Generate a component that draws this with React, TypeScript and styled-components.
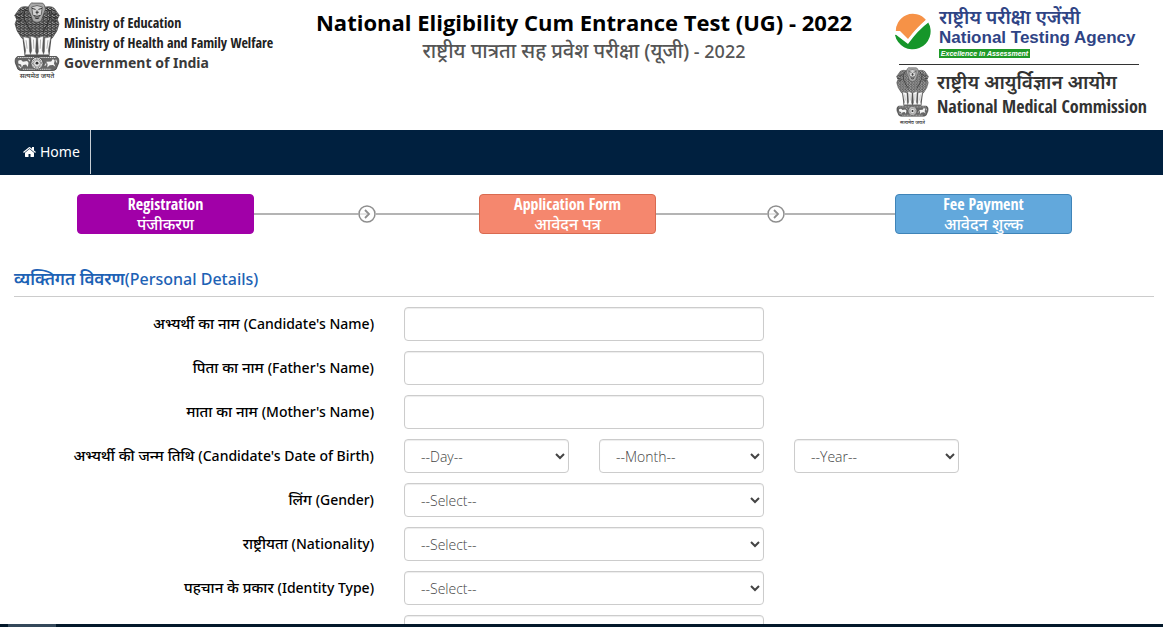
import React from "react";
import styled, { createGlobalStyle, css } from "styled-components";

const GlobalStyle = createGlobalStyle`
  *, *::before, *::after { box-sizing: border-box; }
  html, body { margin: 0; height: 100%; overflow: hidden; }
  body {
    background: #fff;
    color: #000;
    font-family: "Noto Sans", "Open Sans", sans-serif;
    font-size: 14px;
    line-height: 20px;
  }
`;

const condensed = '"Liberation Sans Narrow", "Open Sans Condensed", Roboto, sans-serif';

const Page = styled.div`
  height: 100vh;
  overflow: hidden;
`;

const Header = styled.header`
  display: grid;
  grid-template-columns: 1fr auto 1fr;
  align-items: start;
  min-height: 130px;
  padding: 0 9px 0 14px;
`;

const Ministry = styled.div`
  display: flex;
  gap: 4px;
  padding-top: 2px;
`;

const EmblemFigure = styled.figure<{ $size: number }>`
  display: flex;
  flex-direction: column;
  align-items: center;
  flex: none;
  width: ${(p) => p.$size}px;
  margin: 0;

  svg {
    display: block;
    width: 100%;
    height: auto;
  }
`;

const Motto = styled.figcaption<{ $size: number }>`
  font-size: ${(p) => p.$size}px;
  line-height: 10px;
  font-weight: 500;
  white-space: nowrap;
  color: #333;
`;

const MinistryLines = styled.div`
  padding-top: 11px;
  white-space: nowrap;
`;

const MinistryLine = styled.div<{ $wide?: boolean }>`
  font-family: ${(p) => (p.$wide ? '"Noto Sans", sans-serif' : condensed)};
  font-size: 14px;
  font-weight: 700;
  line-height: 20px;
  color: ${(p) => (p.$wide ? "#3a3a3a" : "#222")};
`;

const Titles = styled.div`
  padding-top: 8px;
  text-align: center;
  white-space: nowrap;
`;

const Title = styled.h1`
  margin: 0;
  font-family: "Open Sans", "Noto Sans", sans-serif;
  font-size: 22px;
  line-height: 28px;
  font-weight: 700;
`;

const Subtitle = styled.p`
  margin: 0;
  font-size: 18px;
  line-height: 30px;
  font-weight: 500;
  color: #555;
`;

const Hindi = styled.span<{ $size: number; $bold?: boolean }>`
  font-size: ${(p) => p.$size}px;
  line-height: 20px;
  font-weight: ${(p) => (p.$bold ? 600 : "inherit")};
`;

const Agencies = styled.div`
  justify-self: end;
  width: 262px;
  white-space: nowrap;
`;

const Agency = styled.div`
  display: flex;
  gap: 8px;
`;

const TestingAgency = styled(Agency)`
  padding: 5px 0 6px 2px;

  > svg {
    flex: none;
    width: 37px;
    height: 37px;
    margin-top: 8px;
  }
`;

const MedicalCommission = styled(Agency)`
  padding: 2px 0 0 4px;
`;

const Rule = styled.hr`
  height: 1px;
  margin: 0 15px 0 7px;
  border: 0;
  background: #333;
`;

const AgencyHindi = styled.div<{ $color: string }>`
  font-size: 19px;
  line-height: 24px;
  font-weight: 600;
  color: ${(p) => p.$color};
`;

const TestingName = styled.div`
  font: 700 17px/18px "Liberation Sans", Arial, sans-serif;
  color: #2f4485;
`;

const Tagline = styled.div`
  width: 91px;
  margin-top: 2px;
  background: #1f9a27;
  color: #fff;
  font: italic 700 7px/9px "Liberation Sans", Arial, sans-serif;
  text-align: center;
`;

const CommissionNames = styled.div`
  padding-top: 3px;
`;

const CommissionName = styled.div`
  font-family: ${condensed};
  font-size: 18px;
  line-height: 24px;
  font-weight: 600;
  color: #333;
`;

const Nav = styled.nav`
  display: flex;
  height: 45px;
  padding-bottom: 1px;
  background: #00203f;
`;

const HomeLink = styled.a`
  display: flex;
  align-items: center;
  gap: 4px;
  padding: 0 10px 0 23px;
  border-right: 1px solid #c6cdd4;
  color: #fff;
  text-decoration: none;

  svg {
    width: 13px;
    height: 14px;
    fill: currentColor;
  }
`;

const Steps = styled.ol`
  display: flex;
  align-items: center;
  margin: 0;
  padding: 19px 91px 0 77px;
  list-style: none;
`;

const Step = styled.li<{ $fill: string; $edge: string }>`
  flex: none;
  width: 177px;
  height: 40px;
  border: 1px solid ${(p) => p.$edge};
  border-radius: 4px;
  background: ${(p) => p.$fill};
  color: #fff;
  font-family: ${condensed};
  font-size: 16px;
  line-height: 19px;
  font-weight: 700;
  text-align: center;
`;

const StepHindi = styled.span`
  display: block;
  font: 500 16px/20px "Noto Sans", sans-serif;
`;

const Connector = styled.li<{ $grow: number }>`
  display: flex;
  align-items: center;
  flex: ${(p) => p.$grow} 1 0;

  &::before,
  &::after {
    content: "";
    flex: 1;
    height: 2px;
    background: #b4b4b4;
  }

  svg {
    flex: none;
    width: 18px;
    height: 18px;
  }
`;

const Form = styled.form`
  padding: 34px 9px 0 14px;
`;

const SectionTitle = styled.h2`
  margin: 0 0 10px;
  padding-bottom: 6px;
  border-bottom: 1px solid #ccc;
  color: #1d62b5;
  font-size: 16px;
  line-height: 22px;
  font-weight: 500;
`;

const FieldRow = styled.div`
  display: grid;
  grid-template-columns: repeat(6, 1fr);
  column-gap: 30px;
  margin-bottom: 10px;
`;

const Label = styled.label`
  grid-column: span 2;
  height: 34px;
  padding-top: 6px;
  text-align: right;
  white-space: nowrap;
  font-weight: 500;
`;

const control = css<{ $span: number }>`
  grid-column: span ${(p) => p.$span};
  width: 100%;
  height: 34px;
  padding: 6px 12px;
  border: 1px solid #ccc;
  border-radius: 4px;
  background: #fff;
  box-shadow: inset 0 1px 1px rgba(0, 0, 0, 0.075);
  color: #444;
  font: 300 14px/20px "Open Sans", "Noto Sans", sans-serif;
`;

const TextInput = styled.input`
  ${control}
`;

const Select = styled.select`
  ${control}
`;

const Taskbar = styled.div`
  position: fixed;
  right: 0;
  bottom: 0;
  left: 0;
  height: 3px;
  padding-left: 8px;
  background: #03182a;
`;

const TaskbarItem = styled.div`
  width: 48px;
  height: 100%;
  background: #34485a;
`;

function Emblem({ size, mottoSize }: { size: number; mottoSize: number }) {
  const id = `mane${size}`;
  return (
    <EmblemFigure $size={size}>
      <svg viewBox="0 0 130 196" aria-hidden="true">
        <defs>
          <pattern id={id} width="11" height="10" patternUnits="userSpaceOnUse">
            <rect width="11" height="10" fill="#bcbcbc" />
            <path d="M0 2q3 5 6 1t5 1M1 8q3 3 5 0t4-2" stroke="#1c1c1c" strokeWidth="2.8" fill="none" />
          </pattern>
        </defs>
        <g stroke="#444" strokeWidth="2" strokeLinejoin="round">
          <path d="M40 14Q18 10 12 24L2 38l6 10-5 14 6 20 13 20 20 8h46l20-8 13-20 6-20-5-14 6-10-10-14q-6-14-28-10Z" fill={`url(#${id})`} />
          <path d="M44 8q5-8 12-5h18q9-2 12 6 7 10-2 24l-7 20q-12 9-24 0l-7-20q-10-12-2-25Z" fill="#a8a8a8" />
          <path d="M50 14q15-8 30 0l-3 22q-12 15-24 0Z" fill="#d2d2d2" />
        </g>
        <g fill="none" stroke="#2a2a2a" strokeWidth="2.6">
          <path d="M51 18l10 3M79 18l-10 3M61 29h9M65 24v11M56 38q9 5 18 0M59 45q6 4 12 0" />
          <path d="M9 34l10 2 6-9M5 45l13 1M10 55q9 1 13-7M121 34l-10 2-6-9M125 45l-13 1M120 55q-9 1-13-7" />
          <path d="M35 19q-11 15-5 31t18 34M95 19q11 15 5 31T82 84" />
        </g>
        <path d="M24 102h82l-6 51H30Z" fill="#555" />
        <g fill="#fafafa" stroke="#555" strokeWidth="1.2">
          <path d="M26 98l17 4 1 38 3 9H31l2-11Z" />
          <path d="M47 96l16 6-2 38 3 9H46l4-11Z" />
          <path d="M83 96l-16 6 2 38-3 9h18l-4-11Z" />
          <path d="M104 98l-17 4-1 38-3 9h16l-2-11Z" />
        </g>
        <path d="M34 108l3 24M55 106l1 26M75 106l-1 26M96 108l-3 24" stroke="#aaa" strokeWidth="2.5" />
        <path d="M10 154h110q9 5 6 19l-7 17q-6 6-18 4H29q-12 2-18-4l-7-17q-3-14 6-19Z" fill="#666" stroke="#333" strokeWidth="2" />
        <path d="M11 157h108M25 190h80" stroke="#d6d6d6" strokeWidth="3" strokeDasharray="4 2" />
        <circle cx="65" cy="173" r="17" fill="#e2e2e2" stroke="#333" strokeWidth="2" />
        <circle cx="65" cy="173" r="11" fill="none" stroke="#777" strokeWidth="6" strokeDasharray="2 2" />
        <circle cx="65" cy="173" r="4" fill="#333" />
        <path d="M12 166q9-5 13 3l12-2 4 5-2 12-5-7-8 1-4 7-2-8-8-3ZM91 169l14-1 5-7 5 4-2 9 4 9-7-5-9 1-7 6 1-10Z" fill="#f4f4f4" />
        <path d="M13 180l7 7M41 162l4 5M87 180l4-6M118 163l3 8" stroke="#e4e4e4" strokeWidth="3" />
      </svg>
      <Motto $size={mottoSize}>सत्यमेव जयते</Motto>
    </EmblemFigure>
  );
}

function TickLogo() {
  return (
    <svg viewBox="0 0 37 37" aria-hidden="true">
      <path d="M2 20A17 17 0 0 1 32 7Q23 15 14 27L6 19Z" fill="#f69247" />
      <path d="M1 22l5-2 8 9Q24 16 34 9A18 18 0 1 1 1 22Z" fill="#16962a" />
      <path d="M1 18l5 0 8 8Q23 14 33 6l2 3Q24 17 14 31L1 21Z" fill="#fff" />
    </svg>
  );
}

function HomeIcon() {
  return (
    <svg viewBox="0 128 1664 1536" aria-hidden="true">
      <path d="M1408 992v480q0 26-19 45t-45 19h-384v-384h-256v384h-384q-26 0-45-19t-19-45v-480q0-1 .5-3t.5-3l575-474 575 474q1 2 1 6zm223-69l-62 74q-8 9-21 11h-3q-13 0-21-7l-692-577-692 577q-12 8-24 7-13-2-21-11l-62-74q-8-10-7-23.5t11-21.5l719-599q32-26 76-26t76 26l244 204v-195q0-14 9-23t23-9h192q14 0 23 9t9 23v408l219 182q10 8 11 21.5t-7 23.5z" />
    </svg>
  );
}

function StepArrow({ grow }: { grow: number }) {
  return (
    <Connector $grow={grow} aria-hidden="true">
      <svg viewBox="0 0 18 18" fill="none" stroke="#8e8e8e">
        <path d="M0 9h9" stroke="#c8c8c8" />
        <circle cx="9" cy="9" r="8" strokeWidth="1.5" />
        <path d="M7 5l4 4-4 4" strokeWidth="1.8" />
      </svg>
    </Connector>
  );
}

const nameFields = [
  { id: "candidate", hindi: "अभ्यर्थी का नाम", english: "(Candidate's Name)" },
  { id: "father", hindi: "पिता का नाम", english: "(Father's Name)" },
  { id: "mother", hindi: "माता का नाम", english: "(Mother's Name)" },
];

const selectFields = [
  { id: "gender", hindi: "लिंग", english: "(Gender)" },
  { id: "nationality", hindi: "राष्ट्रीयता", english: "(Nationality)" },
  { id: "identity", hindi: "पहचान के प्रकार", english: "(Identity Type)" },
];

function FieldLabel({ id, hindi, english }: { id: string; hindi: string; english: string }) {
  return (
    <Label htmlFor={id}>
      <Hindi $size={15}>{hindi} </Hindi>
      {english}
    </Label>
  );
}

export default function App() {
  return (
    <Page>
      <GlobalStyle />
      <Header>
        <Ministry>
          <Emblem size={46} mottoSize={7} />
          <MinistryLines>
            <MinistryLine>Ministry of Education</MinistryLine>
            <MinistryLine>Ministry of Health and Family Welfare</MinistryLine>
            <MinistryLine $wide>Government of India</MinistryLine>
          </MinistryLines>
        </Ministry>
        <Titles>
          <Title>National Eligibility Cum Entrance Test (UG) - 2022</Title>
          <Subtitle>
            <Hindi $size={20}>राष्ट्रीय पात्रता सह प्रवेश परीक्षा (यूजी)</Hindi> - 2022
          </Subtitle>
        </Titles>
        <Agencies>
          <TestingAgency>
            <TickLogo />
            <div>
              <AgencyHindi $color="#2f4485">राष्ट्रीय परीक्षा एजेंसी</AgencyHindi>
              <TestingName>National Testing Agency</TestingName>
              <Tagline>Excellence in Assessment</Tagline>
            </div>
          </TestingAgency>
          <Rule />
          <MedicalCommission>
            <Emblem size={33} mottoSize={5} />
            <CommissionNames>
              <AgencyHindi $color="#333">राष्ट्रीय आयुर्विज्ञान आयोग</AgencyHindi>
              <CommissionName>National Medical Commission</CommissionName>
            </CommissionNames>
          </MedicalCommission>
        </Agencies>
      </Header>
      <Nav>
        <HomeLink href="#home">
          <HomeIcon />
          Home
        </HomeLink>
      </Nav>
      <Steps>
        <Step $fill="#a100a8" $edge="#a100a8">
          Registration
          <StepHindi>पंजीकरण</StepHindi>
        </Step>
        <StepArrow grow={225} />
        <Step $fill="#f5876e" $edge="#d96a50">
          Application Form
          <StepHindi>आवेदन पत्र</StepHindi>
        </Step>
        <StepArrow grow={239} />
        <Step $fill="#62a8dc" $edge="#3f84b8">
          Fee Payment
          <StepHindi>आवेदन शुल्क</StepHindi>
        </Step>
      </Steps>
      <Form>
        <SectionTitle>
          <Hindi $size={17} $bold>व्यक्तिगत विवरण</Hindi>(Personal Details)
        </SectionTitle>
        {nameFields.map((f) => (
          <FieldRow key={f.id}>
            <FieldLabel {...f} />
            <TextInput $span={2} id={f.id} type="text" />
          </FieldRow>
        ))}
        <FieldRow>
          <FieldLabel id="day" hindi="अभ्यर्थी की जन्म तिथि" english="(Candidate's Date of Birth)" />
          <Select $span={1} id="day">
            <option>--Day--</option>
          </Select>
          <Select $span={1} aria-label="Month">
            <option>--Month--</option>
          </Select>
          <Select $span={1} aria-label="Year">
            <option>--Year--</option>
          </Select>
        </FieldRow>
        {selectFields.map((f) => (
          <FieldRow key={f.id}>
            <FieldLabel {...f} />
            <Select $span={2} id={f.id}>
              <option>--Select--</option>
            </Select>
          </FieldRow>
        ))}
        <FieldRow>
          <Label htmlFor="identityNumber" />
          <TextInput $span={2} id="identityNumber" type="text" />
        </FieldRow>
      </Form>
      <Taskbar>
        <TaskbarItem />
      </Taskbar>
    </Page>
  );
}
